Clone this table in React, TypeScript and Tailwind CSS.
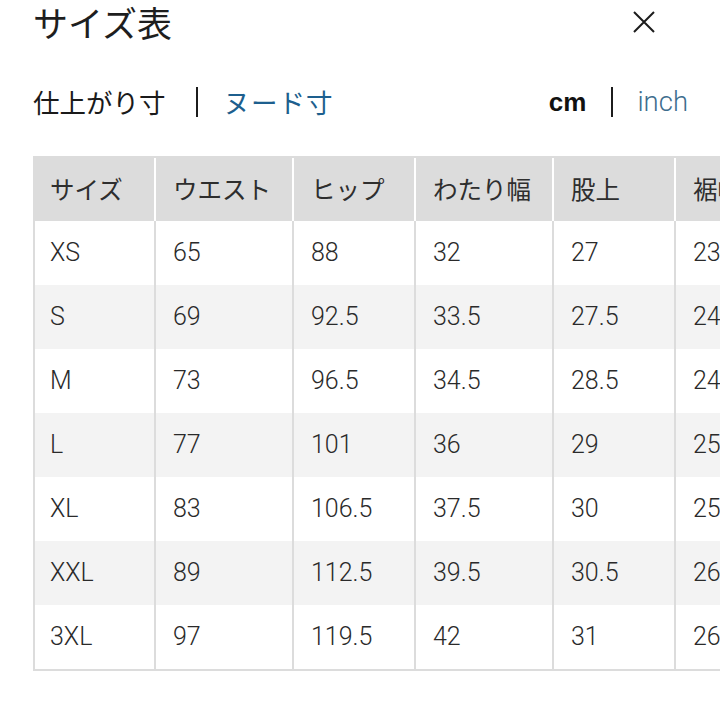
const columns = [
  { label: 'サイズ', width: 'w-[121px] pl-[15px]' },
  { label: 'ウエスト', width: 'w-[138px] pl-[17px]' },
  { label: 'ヒップ', width: 'w-[122px] pl-[17px]' },
  { label: 'わたり幅', width: 'w-[138px] pl-[17px]' },
  { label: '股上', width: 'w-[122px] pl-[17px]' },
  { label: '裾幅', width: 'w-[138px] pl-[17px]' },
]

const rows = [
  ['XS', '65', '88', '32', '27', '23'],
  ['S', '69', '92.5', '33.5', '27.5', '24'],
  ['M', '73', '96.5', '34.5', '28.5', '24.5'],
  ['L', '77', '101', '36', '29', '25'],
  ['XL', '83', '106.5', '37.5', '30', '25.5'],
  ['XXL', '89', '112.5', '39.5', '30.5', '26'],
  ['3XL', '97', '119.5', '42', '31', '26.5'],
]

function Divider() {
  return <div className="h-[30px] w-[2px] bg-[#1c1c1c]" />
}

export default function App() {
  return (
    <div className="h-[720px] w-[720px] overflow-hidden bg-white font-['Roboto','Noto_Sans_CJK_JP',sans-serif] text-[#222]">
      <div className="flex h-[44px] items-center justify-between pl-[33px] pr-[65px]">
        <h1 className="font-['Noto_Sans_CJK_JP',sans-serif] text-[35px] leading-[44px] text-[#1e1e1e]">サイズ表</h1>
        <button className="flex h-[22px] w-[22px] items-center justify-center" type="button">
          <svg width="22" height="22" viewBox="0 0 22 22" fill="none" stroke="#1c1c1c" strokeWidth="2">
            <path d="M1 1L21 21M21 1L1 21" />
          </svg>
        </button>
      </div>

      <div className="mt-[42px] flex h-[32px] items-center justify-between pl-[33px] pr-[32px]">
        <div className="flex items-center">
          <span className="font-['Noto_Sans_CJK_JP',sans-serif] text-[26.5px] leading-none text-[#1a1a1a]">仕上がり寸</span>
          <div className="ml-[30px] mr-[26px]">
            <Divider />
          </div>
          <span className="font-['Noto_Sans_CJK_JP',sans-serif] text-[26.5px] leading-none tracking-[1px] text-[#1d5f8e]">ヌード寸</span>
        </div>
        <div className="flex items-center">
          <span className="font-['Liberation_Sans',sans-serif] text-[26px] font-bold leading-none text-[#111]">cm</span>
          <div className="ml-[25px] mr-[24px]">
            <Divider />
          </div>
          <span className="text-[27.5px] font-light leading-none text-[#3d6d8e]">inch</span>
        </div>
      </div>

      <div className="ml-[33px] mt-[38px] w-max border-y-2 border-l-2 border-[#dcdcdc]">
        <div className="flex h-[63px] bg-[#dcdcdc]">
          {columns.map((col) => (
            <div
              className={`${col.width} flex shrink-0 items-center border-r-2 border-white font-['Noto_Sans_CJK_JP',sans-serif] text-[24.5px] text-[#2e2e2e]`}
              key={col.label}
            >
              {col.label}
            </div>
          ))}
        </div>
        {rows.map((row, rowIndex) => (
          <div className={`flex h-[64px] ${rowIndex % 2 === 1 ? 'bg-[#f3f3f3]' : 'bg-white'}`} key={row[0]}>
            {row.map((value, i) => (
              <div
                className={`${columns[i].width} flex shrink-0 items-center border-r-2 border-[#dcdcdc] text-[25px] font-light text-[#2a2a2a]`}
                key={i}
              >
                {value}
              </div>
            ))}
          </div>
        ))}
      </div>
    </div>
  )
}
